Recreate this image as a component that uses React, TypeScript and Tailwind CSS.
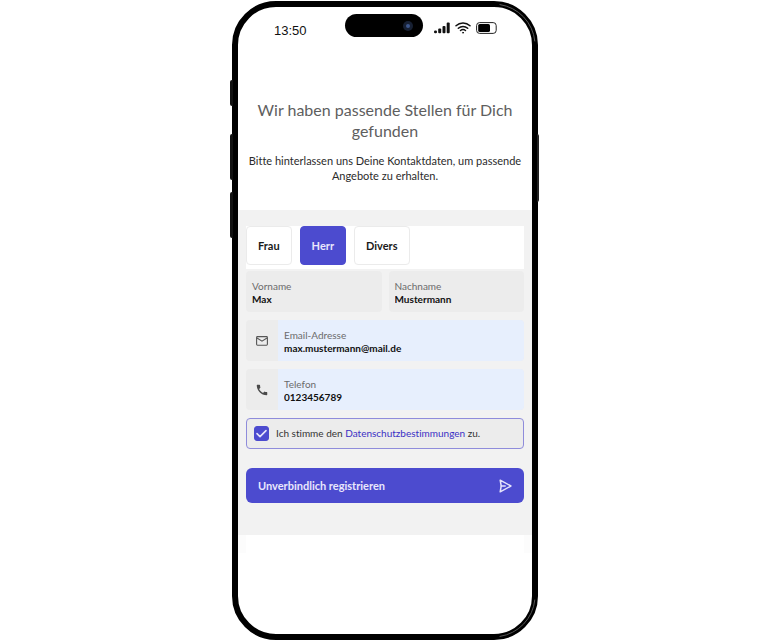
import { useState } from "react";

const salutations = ["Frau", "Herr", "Divers"];

function SignalIcon() {
    return (
        <svg width="16" height="12" viewBox="0 0 16 12" fill="#111" aria-hidden="true">
            <rect x="0" y="8.6" width="3" height="2.6" rx="1.2" />
            <rect x="4.2" y="6.6" width="3" height="4.6" rx="1" />
            <rect x="8.5" y="4" width="3" height="7.2" rx="1" />
            <rect x="12.7" y="0.6" width="3" height="10.6" rx="1" />
        </svg>
    );
}

function WifiIcon() {
    return (
        <svg
            width="16"
            height="12"
            viewBox="0 0 16 12"
            fill="none"
            stroke="#111"
            strokeWidth="1.5"
            strokeLinecap="round"
            aria-hidden="true"
        >
            <path d="M1 3.8C5 .1 11 .1 15 3.8" />
            <path d="M3.3 6.2c2.7-2.4 6.7-2.4 9.4 0" />
            <path d="M5.5 8.5c1.5-1.2 3.5-1.2 5 0" />
            <circle cx="8" cy="10.7" r="0.5" fill="#111" strokeWidth="0.8" />
        </svg>
    );
}

function BatteryIcon() {
    return (
        <svg width="21" height="12" viewBox="0 0 21 12" fill="none" aria-hidden="true">
            <rect x="0.6" y="0.6" width="19.6" height="10.8" rx="3" stroke="#222" />
            <rect x="2.2" y="2" width="11.8" height="8" rx="1.6" fill="#000" />
        </svg>
    );
}

function MailIcon() {
    return (
        <svg width="12" height="10" viewBox="0 0 12 10" fill="none" stroke="#555" strokeWidth="1.1" aria-hidden="true">
            <rect x="0.6" y="0.6" width="10.8" height="8.6" rx="0.9" />
            <path d="M1 2l5 3.1L11 2" />
        </svg>
    );
}

function PhoneIcon() {
    return (
        <svg width="14" height="14" viewBox="0 0 24 24" fill="#4a4a4a" aria-hidden="true">
            <path d="M20.01 15.38c-1.23 0-2.42-.2-3.53-.56a.98.98 0 0 0-1.01.24l-1.57 1.97c-2.83-1.35-5.48-3.9-6.89-6.83l1.95-1.66c.27-.28.35-.67.24-1.02-.37-1.11-.56-2.3-.56-3.53 0-.54-.45-.99-.99-.99H4.19C3.65 3 3 3.24 3 3.99 3 13.28 10.73 21 20.01 21c.71 0 .99-.63.99-1.18v-3.45c0-.54-.45-.99-.99-.99z" />
        </svg>
    );
}

function SendIcon() {
    return (
        <svg
            width="13"
            height="14"
            viewBox="0 0 13 14"
            fill="none"
            stroke="#e6e4fb"
            strokeWidth="1.5"
            strokeLinejoin="round"
            strokeLinecap="round"
            aria-hidden="true"
        >
            <path d="M1.2 1.2L11.9 7 1.2 12.8 2.2 7z" />
            <path d="M2.2 7h4" />
        </svg>
    );
}

type FieldProps = {
    id: string;
    label: string;
    type?: string;
    value: string;
    icon?: React.ReactNode;
};

function Field({ id, label, type = "text", value, icon }: FieldProps) {
    return (
        <div className="flex min-w-0 flex-1 overflow-hidden rounded-sm bg-[#ececec]">
            {icon && <div className="flex w-8 shrink-0 items-center justify-center">{icon}</div>}
            <div className={`min-w-0 flex-1 px-1.5 pt-2 pb-1.5 ${icon ? "bg-[#e7effd]" : ""}`}>
                <label htmlFor={id} className="block text-[10px] leading-[14px] text-[#6b6b6b]">
                    {label}
                </label>
                <input
                    id={id}
                    type={type}
                    defaultValue={value}
                    className="block h-[13px] w-full bg-transparent text-[10px] leading-[13px] font-bold text-[#111] outline-none"
                />
            </div>
        </div>
    );
}

function StatusBar() {
    return (
        <div className="flex items-start justify-between pt-[7px] pr-[35px] pl-9">
            <span className="w-[60px] pt-2 font-['Liberation_Sans',sans-serif] text-[13px] leading-[18px] text-[#111]">
                13:50
            </span>
            <div className="flex h-[23px] w-[78px] items-center justify-end rounded-full bg-black pr-2.5">
                <div className="flex size-2.5 items-center justify-center rounded-full bg-[#172033]">
                    <div className="size-1 rounded-full bg-[#3d568c]" />
                </div>
            </div>
            <div className="flex items-center gap-[5px] pt-2">
                <SignalIcon />
                <WifiIcon />
                <BatteryIcon />
            </div>
        </div>
    );
}

function ContactForm() {
    const [salutation, setSalutation] = useState("Herr");

    return (
        <form className="bg-[#f2f2f2] px-2 pt-4 pb-8" onSubmit={(e) => e.preventDefault()}>
            <div role="radiogroup" aria-label="Anrede" className="flex gap-2 bg-white pb-1">
                {salutations.map((item) => (
                    <label
                        key={item}
                        className={`relative cursor-pointer rounded-sm border px-[11px] py-[11px] text-[11px] leading-[15px] font-bold ${
                            salutation === item
                                ? "border-[#4c4bcf] bg-[#4c4bcf] text-[#e9e7fc]"
                                : "border-[#ebebeb] bg-white text-[#1a1a1a]"
                        }`}
                    >
                        <input
                            type="radio"
                            name="salutation"
                            value={item}
                            checked={salutation === item}
                            onChange={() => setSalutation(item)}
                            className="absolute inset-0 cursor-pointer appearance-none"
                        />
                        {item}
                    </label>
                ))}
            </div>

            <div className="mt-[2px] flex flex-col gap-2">
                <div className="flex gap-[7px]">
                    <Field id="firstname" label="Vorname" value="Max" />
                    <Field id="lastname" label="Nachname" value="Mustermann" />
                </div>
                <Field id="email" label="Email-Adresse" type="email" value="max.mustermann@mail.de" icon={<MailIcon />} />
                <Field id="phone" label="Telefon" type="tel" value="0123456789" icon={<PhoneIcon />} />

                <div className="flex items-center gap-[7px] rounded-sm border border-[#8f8cdb] bg-[#ececec] px-[7px] py-[7px]">
                    <span className="relative flex size-[15px] shrink-0">
                        <input
                            id="privacy"
                            type="checkbox"
                            defaultChecked
                            className="peer size-full appearance-none rounded-[3px] border border-[#4c4bcf] bg-white checked:bg-[#4c4bcf]"
                        />
                        <svg
                            viewBox="0 0 15 15"
                            fill="none"
                            stroke="#e6e4fb"
                            strokeWidth="1.6"
                            strokeLinecap="round"
                            strokeLinejoin="round"
                            className="pointer-events-none absolute inset-0 hidden peer-checked:block"
                            aria-hidden="true"
                        >
                            <path d="M3 7.6l3 3 6-6" />
                        </svg>
                    </span>
                    <label htmlFor="privacy" className="text-[10px] leading-[15px] text-[#333]">
                        Ich stimme den{" "}
                        <a href="#datenschutz" className="text-[#3a2fc4]">
                            Datenschutzbestimmungen
                        </a>{" "}
                        zu.
                    </label>
                </div>
            </div>

            <button
                type="submit"
                className="mt-[19px] flex w-full items-center justify-between rounded-md bg-[#4c4bcf] px-3 py-[10px] text-[11px] leading-[15px] font-bold text-[#e9e7fc]"
            >
                Unverbindlich registrieren
                <SendIcon />
            </button>
        </form>
    );
}

export default function App() {
    return (
        <main className="flex min-h-screen justify-center bg-white pt-px pb-px pl-[2px] font-[Lato,sans-serif] [font-variant-ligatures:none]">
            <div className="relative flex w-full max-w-[306px] flex-col rounded-[44px] border-6 border-black bg-white">
                {/* Side keys */}
                <div className="absolute top-[73px] -left-2 h-[26px] w-[3px] rounded-l-xs bg-[#111]" />
                <div className="absolute top-[127px] -left-2 h-[46px] w-[3px] rounded-l-xs bg-[#111]" />
                <div className="absolute top-[185px] -left-2 h-[46px] w-[3px] rounded-l-xs bg-[#111]" />
                <div className="absolute top-[127px] -right-[7px] h-[68px] w-[2px] rounded-r-xs bg-[#222]" />

                {/* Metal edge highlights */}
                <svg
                    className="pointer-events-none absolute -top-1.5 -right-1.5"
                    width="50"
                    height="50"
                    viewBox="0 0 50 50"
                    fill="none"
                    aria-hidden="true"
                >
                    <path d="M12 3.6A41 41 0 0 1 46.8 40" stroke="#5c5c5c" strokeLinecap="round" />
                </svg>
                <svg
                    className="pointer-events-none absolute -right-1.5 -bottom-1.5"
                    width="50"
                    height="50"
                    viewBox="0 0 50 50"
                    fill="none"
                    aria-hidden="true"
                >
                    <path d="M46.8 10A41 41 0 0 1 12 46.4" stroke="#555" strokeLinecap="round" />
                </svg>

                <StatusBar />

                <div className="px-1.5 pt-[59px] pb-[27px] text-center">
                    <h1 className="text-[16px] leading-[21px] text-[#5e5e5e]">
                        Wir haben passende Stellen für Dich gefunden
                    </h1>
                    <p className="mt-3 text-[11px] leading-[15px] text-[#2b2b2b]">
                        Bitte hinterlassen uns Deine Kontaktdaten, um passende Angebote zu erhalten.
                    </p>
                </div>

                <ContactForm />
                <div className="h-[18px] border-x-8 border-[#fcfcfc]" />
            </div>
        </main>
    );
}
